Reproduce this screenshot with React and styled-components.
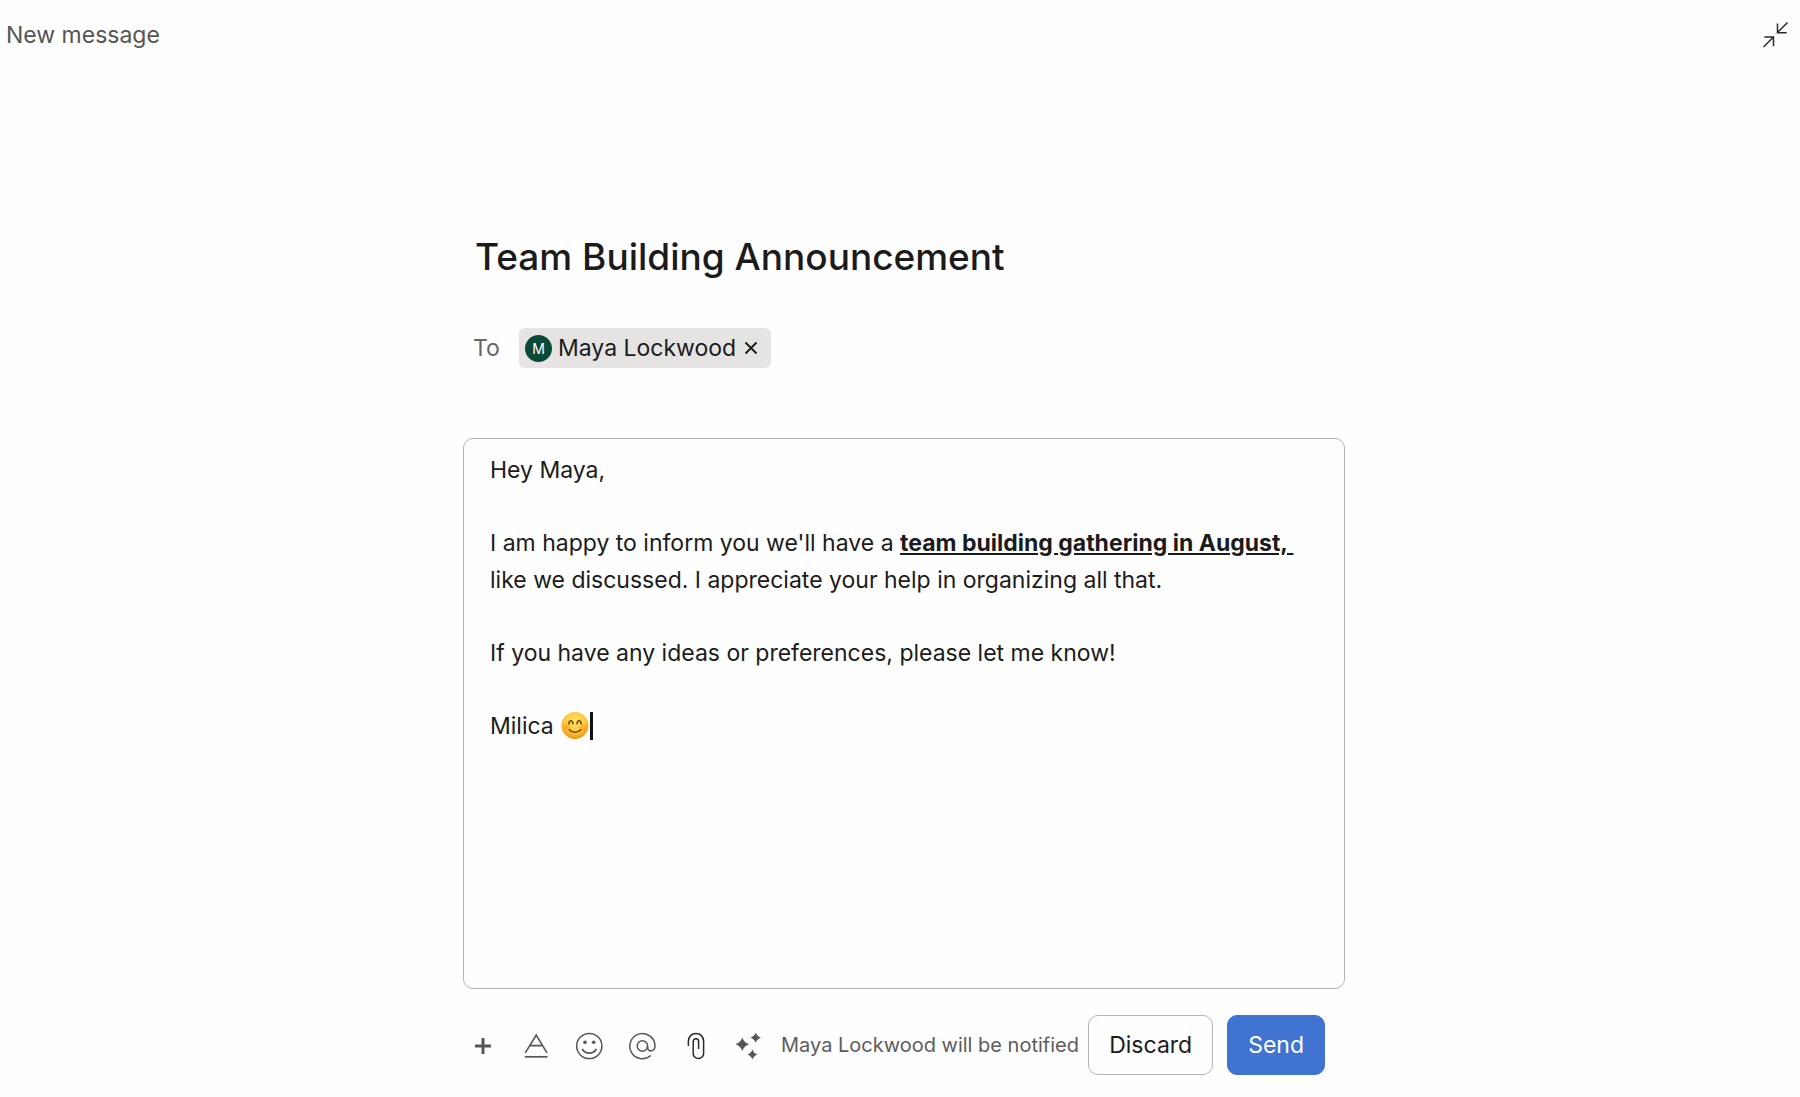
import React, { useState } from 'react';
import styled, { createGlobalStyle } from 'styled-components';

const GlobalStyle = createGlobalStyle`
  * {
    box-sizing: border-box;
  }

  body {
    margin: 0;
    background: #fefefe;
    color: #1b1b1b;
    font-family: Inter, 'Liberation Sans', sans-serif;
    font-size: 23px;
  }

  button, input {
    font: inherit;
    color: inherit;
  }
`;

const CollapseIcon = () => (
  <svg width="28" height="28" viewBox="0 0 28 28" fill="none" stroke="#2a2a2a" strokeWidth="1.5">
    <path d="M26.5 1.5 16.5 11.5M16.5 2.5v9.2h9.2" />
    <path d="M2.5 26 12.5 16M3.3 16h9.2v9.2" />
  </svg>
);

const CloseIcon = () => (
  <svg width="14" height="14" viewBox="0 0 14 14" fill="none" stroke="#1b1b1b" strokeWidth="1.9">
    <path d="M1.5 1.5 12.5 12.5M12.5 1.5 1.5 12.5" />
  </svg>
);

const PlusIcon = () => (
  <path d="M14 6v16M6 14h16" strokeWidth="3" />
);

const FormatIcon = () => (
  <>
    <path d="M3.3 20.9 14.2 3 25 20.9M7.8 13.6h12.8" strokeWidth="1.6" />
    <path d="M2.8 24.8h22.8" strokeWidth="1.7" />
  </>
);

const SmileIcon = () => (
  <>
    <circle cx="14.3" cy="14" r="12.6" strokeWidth="1.5" />
    <circle cx="10" cy="10.3" r="1.8" fill="#565656" stroke="none" />
    <circle cx="18.7" cy="10.3" r="1.8" fill="#565656" stroke="none" />
    <path d="M7.2 17c3 5.4 11.2 5.4 14.2 0" strokeWidth="1.7" />
  </>
);

const MentionIcon = () => (
  <>
    <circle cx="14.4" cy="14" r="5.2" strokeWidth="1.5" />
    <path d="M19.6 14v1.6c0 4.6 7.4 4.6 7.4-1.6A12.6 12.6 0 1 0 22.8 23.5" strokeWidth="1.5" />
  </>
);

const ClipIcon = () => (
  <path
    d="M7.4 14V9a7.6 7.6 0 0 1 15.2 0v12.4a5.2 5.2 0 0 1-10.4 0V9.4a2.7 2.7 0 0 1 5.4 0V17"
    strokeWidth="1.5"
    stroke="#2a2a2a"
  />
);

const SparkleIcon = () => (
  <g fill="#565656" stroke="none">
    <path d="M8.3 5.4Q10 10.6 15.2 12.2Q10 13.8 8.3 19Q6.6 13.8 1.4 12.2Q6.6 10.6 8.3 5.4Z" />
    <path d="M21.7 .6Q23 4.4 26.9 5.7Q23 7 21.7 10.8Q20.4 7 16.5 5.7Q20.4 4.4 21.7 .6Z" />
    <path d="M18.4 17.4Q19.7 21.2 23.5 22.5Q19.7 23.8 18.4 27.6Q17.1 23.8 13.3 22.5Q17.1 21.2 18.4 17.4Z" />
  </g>
);

const BlushEmoji = () => (
  <EmojiSvg viewBox="0 0 28 28" role="img" aria-label="smiling face">
    <defs>
      <radialGradient id="face" cx="50%" cy="36%" r="64%">
        <stop offset="0" stopColor="#ffe36a" />
        <stop offset="0.6" stopColor="#fdc93b" />
        <stop offset="1" stopColor="#ee9412" />
      </radialGradient>
    </defs>
    <circle cx="14" cy="13.5" r="13.5" fill="url(#face)" />
    <circle cx="6" cy="15.5" r="3.2" fill="#f8932c" opacity="0.5" />
    <circle cx="22" cy="15.5" r="3.2" fill="#f8932c" opacity="0.5" />
    <g fill="none" stroke="#73450d" strokeWidth="1.6" strokeLinecap="round">
      <path d="M7.8 11.8c.6-4 3.6-4 4.2 0" />
      <path d="M16 11.8c.6-4 3.6-4 4.2 0" />
      <path d="M8.4 17.7c2.8 3.4 8.4 3.4 11.2 0" />
    </g>
  </EmojiSvg>
);

const tools = [
  { label: 'Add', icon: <PlusIcon /> },
  { label: 'Format text', icon: <FormatIcon /> },
  { label: 'Emoji', icon: <SmileIcon /> },
  { label: 'Mention', icon: <MentionIcon /> },
  { label: 'Attach file', icon: <ClipIcon /> },
  { label: 'Write with AI', icon: <SparkleIcon /> },
];

const App = () => {
  const [subject, setSubject] = useState('Team Building Announcement');
  const [recipients, setRecipients] = useState(['Maya Lockwood']);

  const removeRecipient = (name) => {
    setRecipients(recipients.filter((item) => item !== name));
  };

  return (
    <>
      <GlobalStyle />
      <Header>
        <span>New message</span>
        <IconButton type="button" aria-label="Collapse">
          <CollapseIcon />
        </IconButton>
      </Header>
      <Composer>
        <SubjectInput
          aria-label="Subject"
          value={subject}
          onChange={(e) => setSubject(e.target.value)}
        />
        <RecipientRow>
          <RecipientLabel htmlFor="recipient">To</RecipientLabel>
          {recipients.map((name) => (
            <Chip key={name}>
              <Avatar>{name[0]}</Avatar>
              {name}
              <RemoveButton type="button" aria-label={`Remove ${name}`} onClick={() => removeRecipient(name)}>
                <CloseIcon />
              </RemoveButton>
            </Chip>
          ))}
          <RecipientInput id="recipient" />
        </RecipientRow>
        <Editor contentEditable suppressContentEditableWarning role="textbox" aria-multiline="true" aria-label="Message">
          <Paragraph>Hey Maya,</Paragraph>
          <Paragraph>
            I am happy to inform you we'll have a <Highlight>team building gathering in August,&nbsp;</Highlight>
            <br />
            like we discussed. I appreciate your help in organizing all that.
          </Paragraph>
          <Paragraph>If you have any ideas or preferences, please let me know!</Paragraph>
          <Signature>
            Milica
            <BlushEmoji />
            <Caret />
          </Signature>
        </Editor>
        <Footer>
          <Tools>
            {tools.map((tool) => (
              <IconButton key={tool.label} type="button" aria-label={tool.label}>
                <svg width="28" height="28" viewBox="0 0 28 28" fill="none" stroke="#565656">
                  {tool.icon}
                </svg>
              </IconButton>
            ))}
          </Tools>
          <Notice>Maya Lockwood will be notified</Notice>
          <Actions>
            <ActionButton type="button">Discard</ActionButton>
            <ActionButton type="button" $primary>Send</ActionButton>
          </Actions>
        </Footer>
      </Composer>
    </>
  );
};

export default App;

const Header = styled.header`
  display: flex;
  align-items: center;
  justify-content: space-between;
  height: 70px;
  padding: 0 11px 0 6px;
  color: #555;
`;

const IconButton = styled.button`
  display: flex;
  padding: 0;
  border: 0;
  background: none;
  cursor: pointer;
`;

const Composer = styled.main`
  width: 100%;
  max-width: 890px;
  margin: 0 auto;
  padding: 150px 0 20px 8px;
`;

const SubjectInput = styled.input`
  display: block;
  width: 100%;
  height: 72px;
  padding: 0 12px;
  border: 0;
  outline: 0;
  background: none;
  font-size: 37px;
  font-weight: 500;
`;

const RecipientRow = styled.div`
  display: flex;
  align-items: center;
  margin-top: 36px;
  padding: 0 10px;
`;

const RecipientLabel = styled.label`
  width: 46px;
  color: #666;
`;

const Chip = styled.span`
  display: flex;
  align-items: center;
  height: 40px;
  padding: 0 13px 0 6px;
  border-radius: 6px;
  background: #e5e4e3;
`;

const Avatar = styled.span`
  display: flex;
  align-items: center;
  justify-content: center;
  width: 27px;
  height: 27px;
  margin-right: 6px;
  border-radius: 50%;
  background: #0b4a3b;
  color: #fff;
  font-size: 14px;
`;

const RemoveButton = styled(IconButton)`
  margin-left: 8px;
`;

const RecipientInput = styled.input`
  flex: 1;
  min-width: 0;
  height: 40px;
  border: 0;
  outline: 0;
  background: none;
`;

const Editor = styled.div`
  display: flex;
  flex-direction: column;
  gap: 36px;
  min-height: 551px;
  margin-top: 70px;
  padding: 13px 26px;
  border: 1px solid #b4b4b4;
  border-radius: 10px;
  outline: 0;
  line-height: 37px;
`;

const Paragraph = styled.p`
  margin: 0;
`;

const Highlight = styled.strong`
  font-weight: 700;
  text-decoration: underline;
`;

const Signature = styled(Paragraph)`
  display: flex;
  align-items: center;
  height: 36px;
`;

const EmojiSvg = styled.svg`
  width: 28px;
  height: 28px;
  margin-left: 7px;
`;

const Caret = styled.span`
  width: 3px;
  height: 28px;
  margin-left: 1px;
  background: #111;
`;

const Footer = styled.footer`
  display: flex;
  align-items: center;
  margin-top: 26px;
  padding: 0 20px 0 6px;
`;

const Tools = styled.div`
  display: flex;
  gap: 25px;
  padding-top: 2px;
`;

const Notice = styled.span`
  margin-left: 19px;
  color: #5c5c5c;
  font-size: 20px;
  white-space: nowrap;
`;

const Actions = styled.div`
  display: flex;
  gap: 14px;
  margin-left: auto;
`;

const ActionButton = styled.button`
  height: 60px;
  padding: 0 20px;
  border: 1px solid ${(props) => (props.$primary ? '#4073d2' : '#b4b4b4')};
  border-radius: 10px;
  background: ${(props) => (props.$primary ? '#4073d2' : '#fefefe')};
  color: ${(props) => (props.$primary ? '#fff' : '#1b1b1b')};
  cursor: pointer;
`;
